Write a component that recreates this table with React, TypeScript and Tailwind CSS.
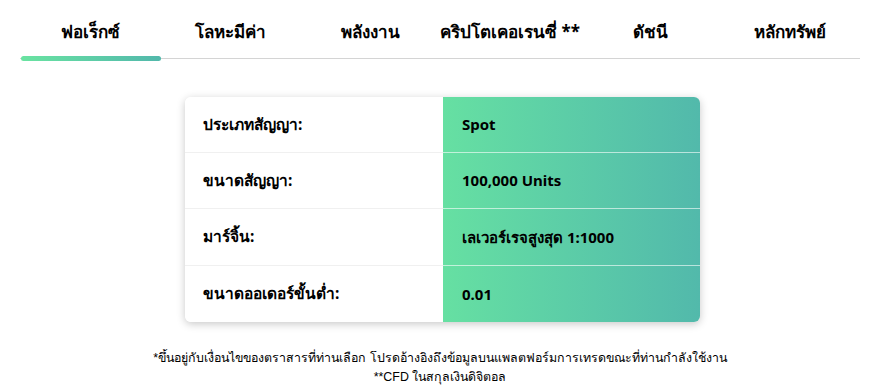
const tabs = ['ฟอเร็กซ์', 'โลหะมีค่า', 'พลังงาน', 'คริปโตเคอเรนซี่ **', 'ดัชนี', 'หลักทรัพย์'];

const rows = [
  ['ประเภทสัญญา:', 'Spot'],
  ['ขนาดสัญญา:', '100,000 Units'],
  ['มาร์จิ้น:', 'เลเวอร์เรจสูงสุด 1:1000'],
  ['ขนาดออเดอร์ขั้นต่ำ:', '0.01'],
];

const rowH = ['h-[55px]', 'h-[56px]', 'h-[57px]', 'h-[57px]'];

export default function App() {
  return (
    <div className="h-[392px] w-[880px] bg-white text-black" style={{ fontFamily: '"Noto Sans", "DejaVu Sans", sans-serif' }}>
      <div className="mx-[20px] flex border-b border-[#d4d4d4] pt-[18px]">
        {tabs.map((t, i) => (
          <div key={t} className="relative flex h-[40px] w-[140px] justify-center">
            <span className="text-[17px] font-bold leading-[28px]">{t}</span>
            {i === 0 && (
              <span className="absolute bottom-[-3px] left-[1px] h-[5px] w-[140px] rounded-full bg-gradient-to-r from-[#6ae3a1] to-[#52b8ab]" />
            )}
          </div>
        ))}
      </div>

      <div className="ml-[185px] mt-[38px] w-[515px] overflow-hidden rounded-[6px] shadow-[0_2px_8px_rgba(0,0,0,0.22)]">
        <div className="grid grid-cols-[258px_257px]">
          <div className="flex flex-col bg-white">
            {rows.map(([l], i) => (
              <div key={l} className={`flex items-center pl-[18px] text-[15.5px] font-bold ${rowH[i]} ${i > 0 ? 'border-t border-[#f0f0f0]' : ''}`}>
                {l}
              </div>
            ))}
          </div>
          <div className="flex flex-col bg-gradient-to-r from-[#66e0a2] to-[#52b9ab]">
            {rows.map(([l, r], i) => (
              <div key={l} className={`flex items-center pl-[19px] text-[15px] font-bold ${rowH[i]} ${i > 0 ? 'border-t border-white/60' : ''}`}>
                {r}
              </div>
            ))}
          </div>
        </div>
      </div>

      <div className="mt-[27px] text-center text-[12.4px] leading-[19px]" style={{ fontFamily: '"Liberation Sans", "DejaVu Sans", sans-serif' }}>
        <p>*ขึ้นอยู่กับเงื่อนไขของตราสารที่ท่านเลือก โปรดอ้างอิงถึงข้อมูลบนแพลตฟอร์มการเทรดขณะที่ท่านกำลังใช้งาน</p>
        <p>**CFD ในสกุลเงินดิจิตอล</p>
      </div>
    </div>
  );
}
